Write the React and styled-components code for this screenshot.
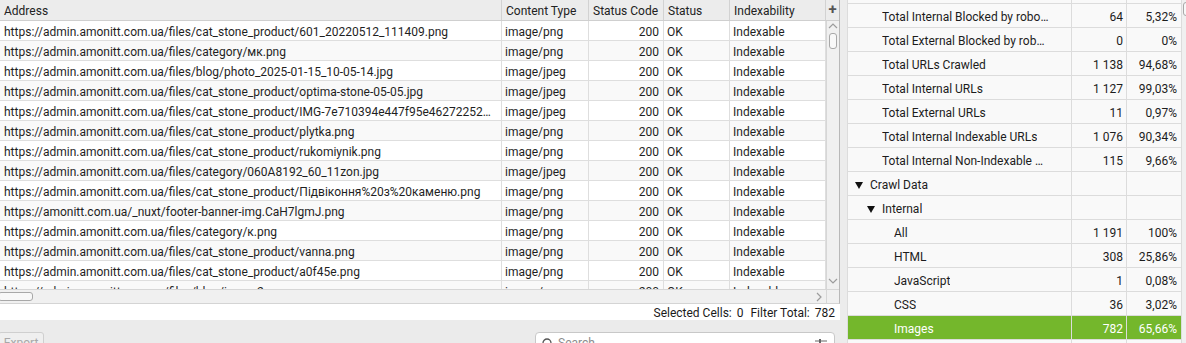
import styled, { createGlobalStyle } from "styled-components";

const GlobalStyle = createGlobalStyle`
  html, body {
    margin: 0;
    padding: 0;
    background: #ececec;
    overflow: hidden;
  }
  body {
    font-family: Roboto, "Noto Sans", sans-serif;
    font-size: 12px;
    color: #1f1f1f;
  }
`;

const COLS = [502, 87, 75, 66, 96];

const HOST = "https://admin.amonitt.com.ua/files/";

const urls = [
  [HOST + "cat_stone_product/601_20220512_111409.png", "image/png"],
  [HOST + "category/мк.png", "image/png"],
  [HOST + "blog/photo_2025-01-15_10-05-14.jpg", "image/jpeg"],
  [HOST + "cat_stone_product/optima-stone-05-05.jpg", "image/jpeg"],
  [HOST + "cat_stone_product/IMG-7e710394e447f95e462722523a8c41f0.jpeg", "image/jpeg"],
  [HOST + "cat_stone_product/plytka.png", "image/png"],
  [HOST + "cat_stone_product/rukomiynik.png", "image/png"],
  [HOST + "category/060A8192_60_11zon.jpg", "image/jpeg"],
  [HOST + "cat_stone_product/Підвіконня%20з%20каменю.png", "image/png"],
  ["https://amonitt.com.ua/_nuxt/footer-banner-img.CaH7lgmJ.png", "image/png"],
  [HOST + "category/к.png", "image/png"],
  [HOST + "cat_stone_product/vanna.png", "image/png"],
  [HOST + "cat_stone_product/a0f45e.png", "image/png"],
  [HOST + "blog/image2.png.png", "image/png"],
];

const tree = [
  { label: "", value: "", pct: "", level: 1 },
  { label: "Total Internal Blocked by robots.txt", value: "64", pct: "5,32%", level: 1 },
  { label: "Total External Blocked by robots.txt", value: "0", pct: "0%", level: 1 },
  { label: "Total URLs Crawled", value: "1 138", pct: "94,68%", level: 1 },
  { label: "Total Internal URLs", value: "1 127", pct: "99,03%", level: 1 },
  { label: "Total External URLs", value: "11", pct: "0,97%", level: 1 },
  { label: "Total Internal Indexable URLs", value: "1 076", pct: "90,34%", level: 1 },
  { label: "Total Internal Non-Indexable URLs", value: "115", pct: "9,66%", level: 1 },
  { label: "Crawl Data", value: "", pct: "", level: 0, open: true },
  { label: "Internal", value: "", pct: "", level: 1, open: true },
  { label: "All", value: "1 191", pct: "100%", level: 2 },
  { label: "HTML", value: "308", pct: "25,86%", level: 2 },
  { label: "JavaScript", value: "1", pct: "0,08%", level: 2 },
  { label: "CSS", value: "36", pct: "3,02%", level: 2 },
  { label: "Images", value: "782", pct: "65,66%", level: 2, selected: true },
  { label: "Media", value: "0", pct: "0%", level: 2 },
];

const Chevron = ({ dir }) => {
  const points = {
    up: "1,6 5,2 9,6",
    down: "1,2 5,6 9,2",
    right: "2,1 6,5 2,9",
  }[dir];
  return (
    <svg width="10" height="10" viewBox="0 0 10 10">
      <polyline points={points} fill="none" stroke="#9c9c9c" strokeWidth="1.2" />
    </svg>
  );
};

const App = () => {
  return (
    <>
      <GlobalStyle />
      <Page>
        <LeftPane>
          <TableFrame>
            <HeaderRow>
              <HeadCell>Address</HeadCell>
              <HeadCell>Content Type</HeadCell>
              <HeadCell>Status Code</HeadCell>
              <HeadCell>Status</HeadCell>
              <HeadCell>Indexability</HeadCell>
              <PlusCell>+</PlusCell>
            </HeaderRow>
            <BodyArea>
              <Rows>
                {urls.map(([url, type], i) => (
                  <Row key={i} $odd={i % 2 === 1}>
                    <Cell>{url}</Cell>
                    <Cell>{type}</Cell>
                    <Cell $right>200</Cell>
                    <Cell>OK</Cell>
                    <Cell>Indexable</Cell>
                  </Row>
                ))}
              </Rows>
              <VScroll>
                <Chevron dir="up" />
                <VThumb />
                <VTrack />
                <Chevron dir="down" />
              </VScroll>
            </BodyArea>
            <HScrollRow>
              <HTrack>
                <HThumb />
                <Chevron dir="right" />
              </HTrack>
              <Corner />
            </HScrollRow>
          </TableFrame>
          <StatusBar>
            <span>Selected Cells:</span>
            <span>0</span>
            <span>Filter Total:</span>
            <span>782</span>
          </StatusBar>
          <BottomBar>
            <ExportButton disabled>Export</ExportButton>
            <SearchBox>
              <svg width="11" height="11" viewBox="0 0 11 11">
                <circle cx="5" cy="5" r="4" fill="none" stroke="#555" strokeWidth="1.3" />
              </svg>
              <SearchText>Search</SearchText>
              <svg width="12" height="10" viewBox="0 0 12 10">
                <line x1="0" y1="3" x2="12" y2="3" stroke="#666" strokeWidth="1" />
                <rect x="4" y="1" width="2" height="4" fill="#666" />
                <line x1="0" y1="8" x2="12" y2="8" stroke="#666" strokeWidth="1" />
              </svg>
            </SearchBox>
          </BottomBar>
        </LeftPane>
        <Splitter />
        <RightPane>
          <TreeViewport>
            <TreeList>
              {tree.map((r, i) => (
                <TreeRow key={i} $selected={r.selected}>
                  <TreeLabel $level={r.level}>
                    <Arrow>
                      {r.open && (
                        <svg width="8" height="7" viewBox="0 0 8 7">
                          <polygon points="0,0 8,0 4,7" fill="#111" />
                        </svg>
                      )}
                    </Arrow>
                    <LabelText>{r.label}</LabelText>
                  </TreeLabel>
                  <TreeNum>{r.value}</TreeNum>
                  <TreeNum>{r.pct}</TreeNum>
                </TreeRow>
              ))}
            </TreeList>
          </TreeViewport>
          <RScroll>
            <RThumb />
          </RScroll>
        </RightPane>
      </Page>
    </>
  );
};

const Page = styled.div`
  display: flex;
  width: 1186px;
  height: 343px;
  overflow: hidden;
  background: #ececec;
`;

const LeftPane = styled.div`
  width: 840px;
  flex-shrink: 0;
  display: flex;
  flex-direction: column;
`;

const TableFrame = styled.div`
  height: 304px;
  box-sizing: border-box;
  border-right: 1px solid #b8b8b8;
  border-bottom: 1px solid #d4d4d4;
  display: flex;
  flex-direction: column;
  background: #ffffff;
`;

const columns = COLS.map((c) => c + "px").join(" ");

const HeaderRow = styled.div`
  display: grid;
  grid-template-columns: ${columns} 13px;
  height: 21px;
  box-sizing: border-box;
  background: #ececec;
  border-bottom: 1px solid #cfcfcf;
`;

const HeadCell = styled.div`
  box-sizing: border-box;
  border-right: 1px solid #d2d2d2;
  padding: 3px 4px 0;
  line-height: 17px;
  white-space: nowrap;
  overflow: hidden;
  color: #222;
`;

const PlusCell = styled.div`
  text-align: center;
  line-height: 19px;
  font-size: 15px;
  font-weight: 700;
  color: #555;
`;

const BodyArea = styled.div`
  display: flex;
  height: 269px;
  overflow: hidden;
`;

const Rows = styled.div`
  width: 826px;
  overflow: hidden;
`;

const Row = styled.div`
  display: grid;
  grid-template-columns: ${columns};
  height: 20px;
  box-sizing: border-box;
  border-bottom: 1px solid #dedede;
  background: ${(p) => (p.$odd ? "#f9f9f9" : "#ffffff")};
`;

const Cell = styled.div`
  box-sizing: border-box;
  border-right: 1px solid #dedede;
  padding: 3px 4px 0 3px;
  line-height: 16px;
  white-space: nowrap;
  overflow: hidden;
  text-overflow: ellipsis;
  text-align: ${(p) => (p.$right ? "right" : "left")};
  &:first-child {
    padding-left: 4px;
  }
`;

const VScroll = styled.div`
  width: 13px;
  box-sizing: border-box;
  border-left: 1px solid #d6d6d6;
  background: #f0f0f0;
  display: flex;
  flex-direction: column;
  align-items: center;
  padding: 1px 0 2px;
`;

const VThumb = styled.div`
  width: 8px;
  height: 16px;
  margin-top: 1px;
  box-sizing: border-box;
  border: 1px solid #a8a8a8;
  border-radius: 3px;
  background: #f8f8f8;
`;

const VTrack = styled.div`
  flex: 1;
`;

const HScrollRow = styled.div`
  display: flex;
  height: 14px;
  box-sizing: border-box;
  border-top: 1px solid #d6d6d6;
  background: #f0f0f0;
`;

const HTrack = styled.div`
  width: 826px;
  display: flex;
  align-items: center;
  justify-content: space-between;
  padding-right: 1px;
  box-sizing: border-box;
`;

const HThumb = styled.div`
  width: 35px;
  height: 9px;
  margin-left: -2px;
  box-sizing: border-box;
  border: 1px solid #a8a8a8;
  border-radius: 3px;
  background: #f8f8f8;
`;

const Corner = styled.div`
  flex: 1;
  border-left: 1px solid #d6d6d6;
`;

const StatusBar = styled.div`
  height: 16px;
  box-sizing: border-box;
  padding-top: 2px;
  background: #ffffff;
  display: flex;
  justify-content: flex-end;
  align-items: center;
  gap: 5px;
  padding-right: 5px;
  font-size: 12px;
  color: #1a1a1a;
  span:nth-child(2) {
    margin-right: 2px;
  }
`;

const BottomBar = styled.div`
  flex: 1;
  background: #ebebeb;
  display: flex;
  justify-content: space-between;
  align-items: flex-start;
  padding-top: 12px;
  padding-right: 5px;
`;

const ExportButton = styled.button`
  margin-left: -2px;
  width: 46px;
  height: 22px;
  box-sizing: border-box;
  border: 1px solid #cfcfcf;
  border-radius: 3px;
  background: #efefef;
  color: #a8a8a8;
  font-family: Roboto, sans-serif;
  font-size: 12px;
  padding: 0;
`;

const SearchBox = styled.div`
  width: 300px;
  height: 22px;
  box-sizing: border-box;
  border: 1px solid #c8c8c8;
  border-radius: 4px;
  background: #ffffff;
  display: flex;
  align-items: center;
  gap: 5px;
  padding: 0 7px 0 6px;
`;

const SearchText = styled.span`
  flex: 1;
  color: #8c8c8c;
  font-size: 12px;
`;

const Splitter = styled.div`
  width: 7px;
  flex-shrink: 0;
  background: #ececec;
`;

const RightPane = styled.div`
  flex: 1;
  display: flex;
  overflow: hidden;
`;

const TreeViewport = styled.div`
  width: 334px;
  overflow: hidden;
  background: #f9f9f9;
  box-sizing: border-box;
  border-left: 1px solid #dcdcdc;
`;

const TreeList = styled.div`
  margin-top: -20px;
`;

const TreeRow = styled.div`
  display: grid;
  grid-template-columns: 224px 55px 54px;
  height: 24px;
  box-sizing: border-box;
  border-bottom: 1px solid #dcdcdc;
  background: ${(p) => (p.$selected ? "#74b72c" : "transparent")};
  color: ${(p) => (p.$selected ? "#ffffff" : "#1c1c1c")};
`;

const TreeLabel = styled.div`
  display: flex;
  align-items: center;
  min-width: 0;
  padding-top: 3px;
  line-height: 20px;
  padding-left: ${(p) => 7 + p.$level * 12}px;
  padding-right: 22px;
  border-right: 1px solid #dcdcdc;
`;

const Arrow = styled.span`
  width: 15px;
  flex-shrink: 0;
  display: flex;
  align-items: center;
`;

const LabelText = styled.span`
  white-space: nowrap;
  overflow: hidden;
  text-overflow: ellipsis;
`;

const TreeNum = styled.div`
  text-align: right;
  padding-right: 3px;
  padding-top: 3px;
  line-height: 20px;
  border-right: 1px solid #dcdcdc;
  white-space: nowrap;
  &:last-child {
    padding-right: 4px;
    border-right: none;
  }
`;

const RScroll = styled.div`
  flex: 1;
  background: #f0f0f0;
  border-left: 1px solid #dcdcdc;
  overflow: hidden;
`;

const RThumb = styled.div`
  width: 8px;
  height: 14px;
  margin: 2px 0 0 1px;
  box-sizing: border-box;
  border: 1px solid #a8a8a8;
  border-radius: 3px;
  background: #f8f8f8;
`;

export default App;
